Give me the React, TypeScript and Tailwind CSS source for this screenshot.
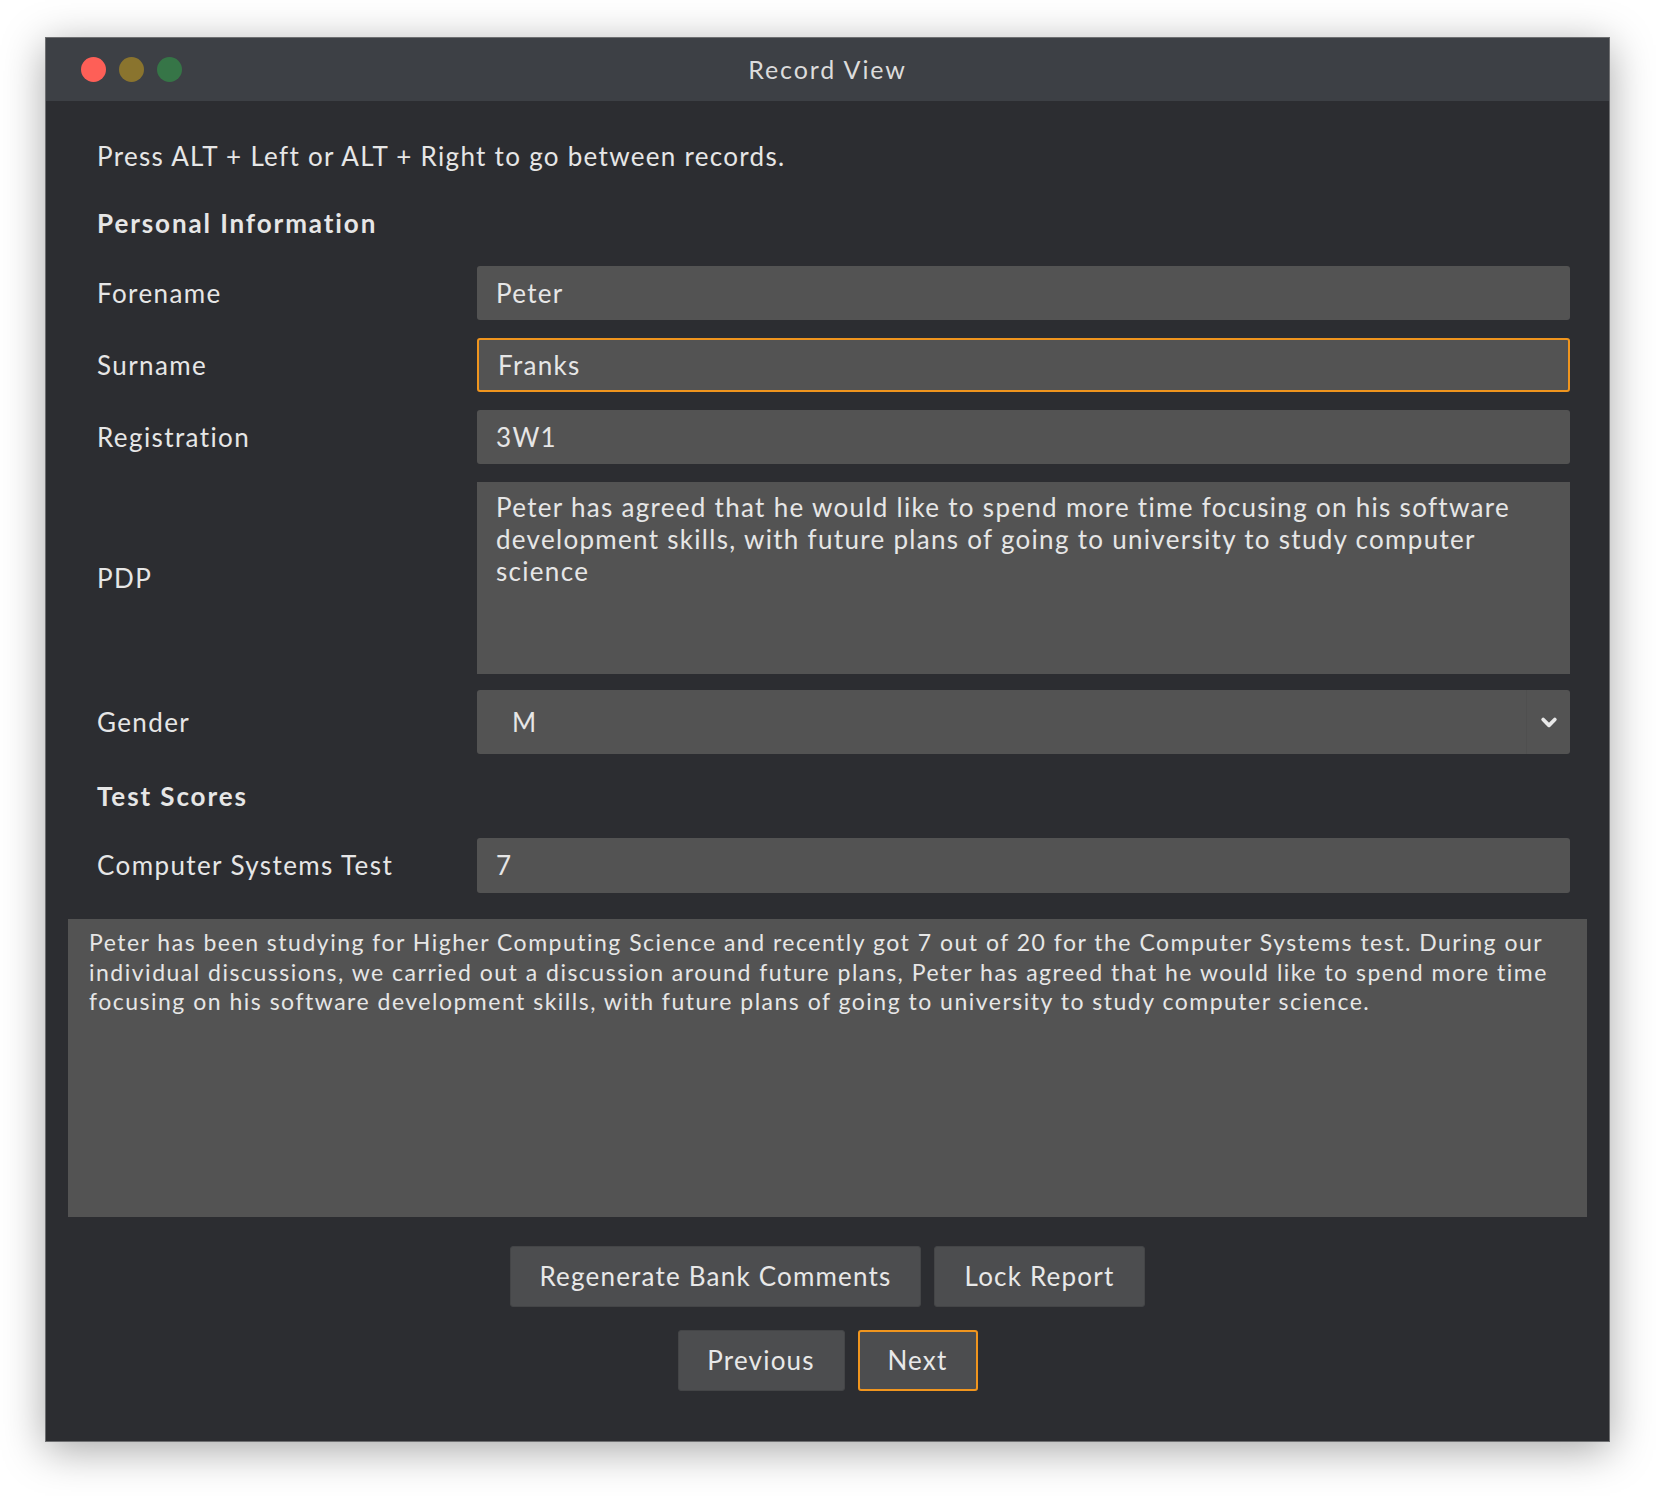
import React from 'react';

const Field: React.FC<{ value: string; focused?: boolean }> = ({ value, focused }) => (
  <div
    className={
      'flex h-[54px] flex-1 items-center rounded-[3px] bg-[#535353] pl-[19px] text-[26px] tracking-[1.3px] text-[#e6e6e6] ' +
      (focused ? 'border-2 border-[#f0951e] pl-[17px]' : '')
    }
  >
    {value}
  </div>
);

const Row: React.FC<{ label: string; children: React.ReactNode; className?: string }> = ({ label, children, className }) => (
  <div className={'flex items-center ' + (className ?? '')}>
    <div className="w-[380px] shrink-0 text-[26px] tracking-[1.4px] text-[#e6e6e6]">{label}</div>
    {children}
  </div>
);

const Btn: React.FC<{ label: string; className?: string; active?: boolean }> = ({ label, className, active }) => (
  <button
    className={
      'h-[61px] rounded-[3px] bg-[#4c4d4f] text-[26px] tracking-[1.2px] text-[#e8e8e8] ' +
      (active ? 'border-2 border-[#f0951e] ' : 'border border-[#444547] ') +
      (className ?? '')
    }
  >
    {label}
  </button>
);

export default function App() {
  return (
    <div className="min-h-screen bg-white pl-[45px] pt-[37px] font-['Lato','Noto_Sans',sans-serif]">
      <div className="flex w-[1565px] flex-col border border-[#6e6f71] bg-[#2c2d31] shadow-[0_8px_40px_rgba(0,0,0,0.35)]">
        {/* title bar */}
        <div className="relative flex h-[63px] items-center bg-[#3d4045] px-[35px]">
          <div className="flex gap-[13px]">
            <span className="h-[25px] w-[25px] rounded-full bg-[#fe5f57]" />
            <span className="h-[25px] w-[25px] rounded-full bg-[#8a742e]" />
            <span className="h-[25px] w-[25px] rounded-full bg-[#367547]" />
          </div>
          <div className="absolute inset-0 flex items-center justify-center text-[25px] tracking-[1.9px] text-[#dcdcdc]">
            Record View
          </div>
        </div>

        {/* body */}
        <div className="flex flex-col pb-[50px] pt-[39px]">
          <div className="flex flex-col pl-[51px] pr-[39px]">
            <div className="text-[26px] leading-[32px] tracking-[1.3px] text-[#e6e6e6]">
              Press ALT + Left or ALT + Right to go between records.
            </div>
            <div className="mt-[35px] text-[26px] font-bold leading-[32px] tracking-[1.9px] text-[#e6e6e6]">
              Personal Information
            </div>

            <div className="mt-[27px] flex flex-col gap-[18px]">
              <Row label="Forename">
                <Field value="Peter" />
              </Row>
              <Row label="Surname">
                <Field value="Franks" focused />
              </Row>
              <Row label="Registration">
                <Field value="3W1" />
              </Row>
              <Row label="PDP">
                <div className="h-[192px] flex-1 bg-[#535353] pl-[19px] pt-[9px] text-[26px] leading-[32px] tracking-[1.3px] text-[#e6e6e6]">
                  <div className="whitespace-nowrap">
                    Peter has agreed that he would like to spend more time focusing on his software
                  </div>
                  <div className="whitespace-nowrap">
                    development skills, with future plans of going to university to study computer
                  </div>
                  <div>science</div>
                </div>
              </Row>
            </div>

            <Row label="Gender" className="mt-[16px]">
              <div className="flex h-[64px] flex-1 items-center rounded-[3px] bg-[#535353] text-[26px] text-[#e6e6e6]">
                <span className="flex-1 pl-[35px]">M</span>
                <span className="flex h-full w-[44px] items-center justify-center border-l border-[#4f4f4f]">
                  <svg width="20" height="20" viewBox="0 0 24 24" fill="none" stroke="#e8e8e8" strokeWidth="4.5" strokeLinecap="round" strokeLinejoin="round">
                    <path d="M5 9l7 7 7-7" />
                  </svg>
                </span>
              </div>
            </Row>

            <div className="mt-[26px] text-[26px] font-bold leading-[32px] tracking-[1.9px] text-[#e6e6e6]">Test Scores</div>

            <Row label="Computer Systems Test" className="mt-[26px]">
              <div className="flex h-[55px] flex-1 items-center rounded-[3px] bg-[#535353] pl-[19px] text-[26px] text-[#e6e6e6]">
                7
              </div>
            </Row>
          </div>

          {/* generated comment */}
          <div className="mx-[22px] mt-[26px] h-[298px] bg-[#535353] px-[21px] pt-[9px] text-[23px] leading-[29.5px] tracking-[1.5px] text-[#e6e6e6]">
            <div className="whitespace-nowrap">
              Peter has been studying for Higher Computing Science and recently got 7 out of 20 for the Computer Systems test. During our
            </div>
            <div className="whitespace-nowrap">
              individual discussions, we carried out a discussion around future plans, Peter has agreed that he would like to spend more time
            </div>
            <div className="whitespace-nowrap">
              focusing on his software development skills, with future plans of going to university to study computer science.
            </div>
          </div>

          <div className="mt-[29px] flex justify-center gap-[13px]">
            <Btn label="Regenerate Bank Comments" className="w-[411px]" />
            <Btn label="Lock Report" className="w-[211px]" />
          </div>
          <div className="mt-[23px] flex justify-center gap-[13px]">
            <Btn label="Previous" className="w-[167px]" />
            <Btn label="Next" className="w-[120px]" active />
          </div>
        </div>
      </div>
    </div>
  );
}
